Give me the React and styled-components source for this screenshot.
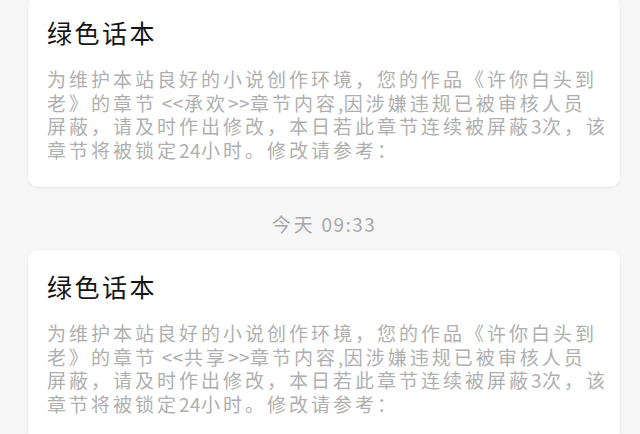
import styled, { createGlobalStyle } from 'styled-components';

const GlobalStyle = createGlobalStyle`
  html, body {
    margin: 0;
    padding: 0;
    background: #f6f6f6;
  }
  body {
    font-family: "Noto Sans CJK SC", "Noto Sans", sans-serif;
    overflow: hidden;
  }
`;

const messages = [
  {
    id: 1,
    title: '绿色话本',
    lines: [
      '为维护本站良好的小说创作环境，您的作品《许你白头到',
      '老》的章节 <<承欢>>章节内容,因涉嫌违规已被审核人员',
      '屏蔽，请及时作出修改，本日若此章节连续被屏蔽3次，该',
      '章节将被锁定24小时。修改请参考：',
    ],
  },
  {
    id: 2,
    time: '今天 09:33',
    title: '绿色话本',
    lines: [
      '为维护本站良好的小说创作环境，您的作品《许你白头到',
      '老》的章节 <<共享>>章节内容,因涉嫌违规已被审核人员',
      '屏蔽，请及时作出修改，本日若此章节连续被屏蔽3次，该',
      '章节将被锁定24小时。修改请参考：',
    ],
  },
];

// half-width runs get tighter spacing than the wide CJK glyphs
const splitRuns = (text) =>
  text.split(/([\x20-\x7e]+)/).filter(Boolean).map((part, i) =>
    /^[\x20-\x7e]+$/.test(part) ? <Latin key={i}>{part}</Latin> : part
  );

const App = () => (
  <>
    <GlobalStyle />
    <Feed>
      {messages.map((msg) => (
        <Item key={msg.id}>
          {msg.time && <Time>{splitRuns(msg.time)}</Time>}
          <Card>
            <Title>{msg.title}</Title>
            <Body>
              {msg.lines.map((line) => (
                <Line key={line}>{splitRuns(line)}</Line>
              ))}
            </Body>
          </Card>
        </Item>
      ))}
    </Feed>
  </>
);

const Feed = styled.div`
  display: flex;
  flex-direction: column;
  width: 640px;
  margin-top: -4px;
`;

const Item = styled.section`
  display: flex;
  flex-direction: column;
`;

const Time = styled.div`
  margin: 25px 20px 14px 28px;
  text-align: center;
  font-size: 19px;
  line-height: 24px;
  letter-spacing: 3px;
  color: #a8a8a8;

  span {
    letter-spacing: 1.5px;
  }
`;

const Card = styled.div`
  margin: 0 20px 0 28px;
  padding: 20px 18px 26px 19px;
  background: #fff;
  border-radius: 10px;
  box-shadow: 0 0 0 1px rgba(0, 0, 0, 0.025), 0 1px 3px rgba(0, 0, 0, 0.04);
`;

const Title = styled.h2`
  margin: 0;
  font-size: 25px;
  line-height: 32px;
  font-weight: 400;
  letter-spacing: 2.5px;
  color: #141414;
`;

const Body = styled.p`
  margin: 19px 0 0;
  font-size: 19px;
  line-height: 23.5px;
  letter-spacing: 3px;
  color: #afafaf;
`;

const Line = styled.span`
  display: block;
  white-space: nowrap;
`;

const Latin = styled.span`
  letter-spacing: 0.5px;
`;

export default App;
